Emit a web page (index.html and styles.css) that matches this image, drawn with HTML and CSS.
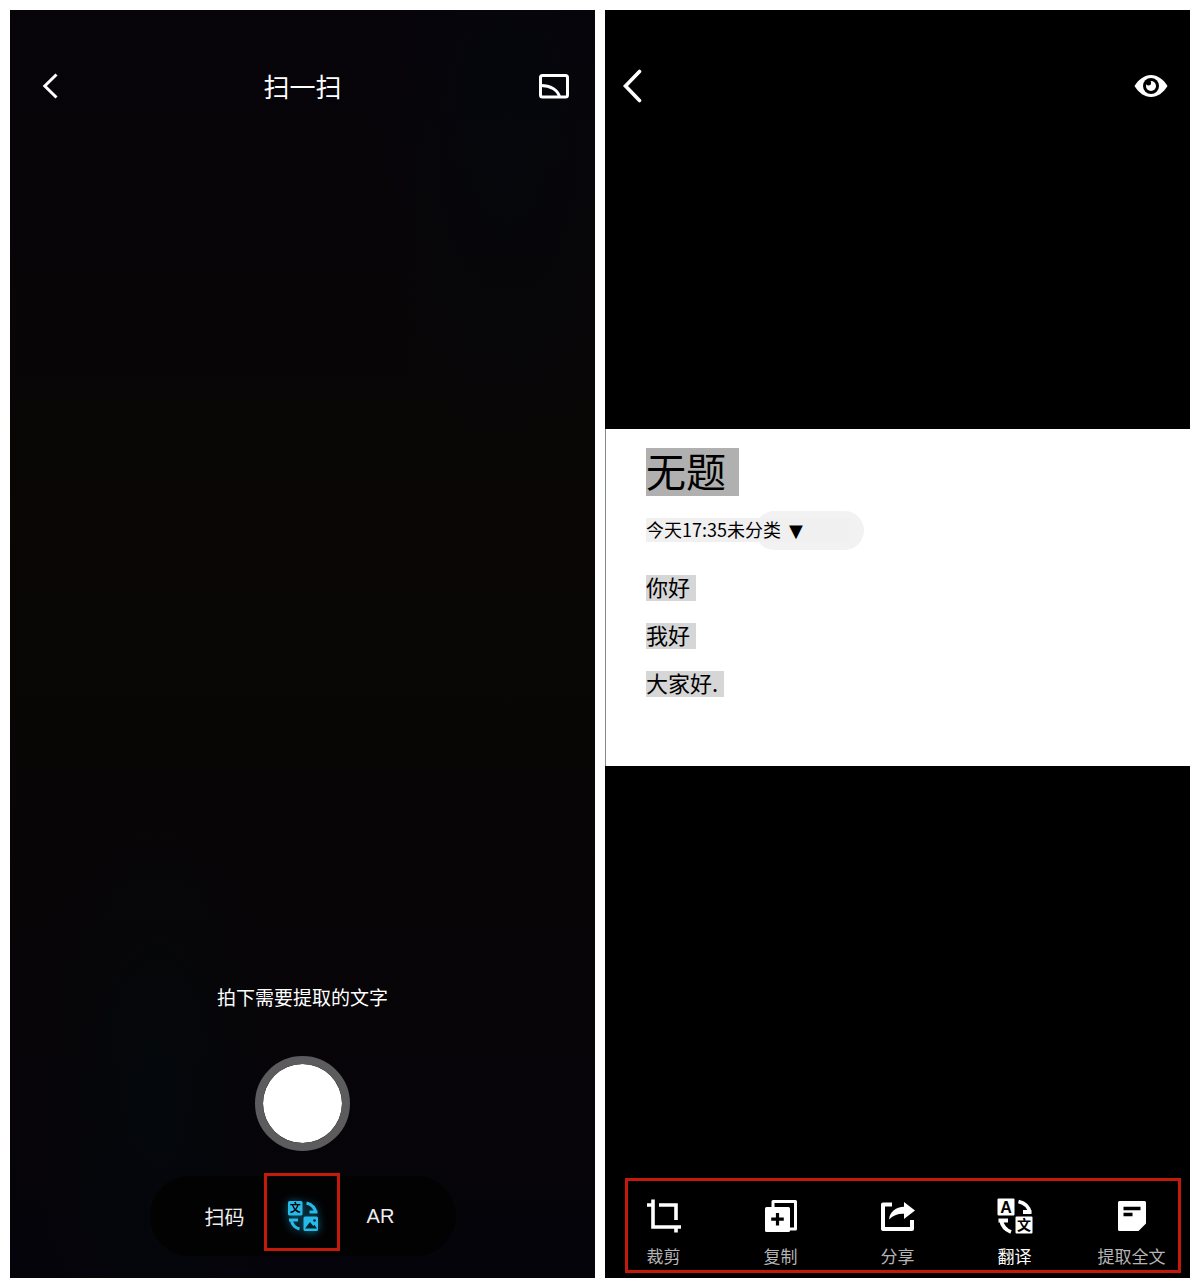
FILE: index.html
```html
<!DOCTYPE html>
<html lang="zh-CN">
<head>
  <meta charset="UTF-8">
  <meta name="viewport" content="width=device-width, initial-scale=1.0">
  <title>扫一扫</title>
  <link rel="stylesheet" href="styles.css">
</head>
<body>
  <main class="screens">
    <section class="screen camera">
      <header class="topbar">
        <button class="icon-button back" type="button" aria-label="返回">
          <svg width="16" height="26" viewBox="0 0 16 26" fill="none" stroke="currentColor" stroke-width="3">
            <path d="M14.5 1.5L2.8 13l11.7 11.5"/>
          </svg>
        </button>
        <h1 class="topbar-title">扫一扫</h1>
        <button class="icon-button album" type="button" aria-label="相册">
          <svg width="30" height="25" viewBox="0 0 30 25" fill="none" stroke="currentColor" stroke-width="3">
            <rect x="1.5" y="1.5" width="27" height="21.5" rx="2"/>
            <path d="M2 11.5C11 11.5 19 15.5 20.5 23"/>
          </svg>
        </button>
      </header>

      <div class="capture">
        <p class="hint">拍下需要提取的文字</p>
        <button class="shutter" type="button" aria-label="拍照"></button>
        <nav class="modes">
          <button class="mode" type="button">扫码</button>
          <button class="mode active" type="button" aria-label="文字识别">
            <svg class="mode-icon" width="30" height="30" viewBox="0 0 30 30">
              <rect width="14.5" height="14.5" rx="1.5"/>
              <rect x="15.5" y="15.5" width="14.5" height="14.5" rx="1.5"/>
              <text class="glyph" x="7.2" y="11.4" font-size="11">文</text>
              <path class="hole" d="M17 27.5l5-6.5 3.2 4 1.2-1.3 2.6 3.8z"/>
              <circle class="hole" cx="26.5" cy="19.5" r="1.3"/>
              <path class="arc" d="M18.5 2C24 3.500 27 6.500 28 12M21.500 11h8M11.500 28C6 26.500 4 23.500 3 18.500M1 19h9"/>
            </svg>
          </button>
          <button class="mode" type="button">AR</button>
        </nav>
      </div>
    </section>

    <section class="screen result">
      <header class="topbar">
        <button class="icon-button" type="button" aria-label="返回">
          <svg width="20" height="34" viewBox="0 0 20 34" fill="none" stroke="currentColor" stroke-width="3.6" stroke-linecap="round">
            <path d="M17.500 2.500L3.500 17l14 14.500"/>
          </svg>
        </button>
        <button class="icon-button preview" type="button" aria-label="查看原图">
          <svg width="34" height="22" viewBox="0 0 34 22">
            <path fill="currentColor" d="M.5 11C5 4 10.500 0 17 0s12 4 16.500 11C29 18 23.500 22 17 22S5 18 .5 11z"/>
            <circle cx="17" cy="11" r="8"/>
            <circle fill="currentColor" cx="17" cy="11" r="5"/>
            <circle cx="14.5" cy="7.8" r="2.6"/>
          </svg>
        </button>
      </header>

      <div class="viewer">
        <article class="photo">
          <h2 class="note-title"><mark>无题</mark></h2>
          <p class="note-meta"><span class="meta-text">今天17:35未分类 <span class="arrow">▼</span></span></p>
          <ul class="note-lines">
            <li><mark>你好</mark></li>
            <li><mark>我好</mark></li>
            <li><mark>大家好.</mark></li>
          </ul>
        </article>
      </div>

      <nav class="toolbar">
        <button class="tool" type="button">
          <span class="tool-icon">
            <svg width="34" height="34" viewBox="0 0 34 34" fill="none" stroke="currentColor" stroke-width="3.6">
              <path d="M6 .5V28h28M0 6h6M12 6h17v15M29 28v5.5"/>
            </svg>
          </span>
          裁剪
        </button>
        <button class="tool" type="button">
          <span class="tool-icon">
            <svg width="32" height="32" viewBox="0 0 32 32">
              <path d="M8 8V1.5h22.5V29H24" fill="none" stroke="currentColor" stroke-width="3" stroke-linejoin="round"/>
              <rect y="7" width="25" height="25" rx="1.5" fill="currentColor"/>
              <path d="M12.5 13v12.500M6.200 19.200h12.600" stroke="#000" stroke-width="3.200"/>
            </svg>
          </span>
          复制
        </button>
        <button class="tool" type="button">
          <span class="tool-icon">
            <svg width="34" height="34" viewBox="0 0 34 34">
              <path d="M11 5.500H2V30h29V21" fill="none" stroke="currentColor" stroke-width="4" stroke-linejoin="round"/>
              <path d="M23 3l11 8.500L23 20v-5.200C17 14.500 12 16.500 8 20.500 9 12.500 15 8 23 7.800z" fill="currentColor"/>
            </svg>
          </span>
          分享
        </button>
        <button class="tool selected" type="button">
          <span class="tool-icon">
            <svg width="36" height="36" viewBox="0 0 36 36" fill="currentColor">
              <rect x=".5" y=".5" width="17" height="17" rx="1"/>
              <rect x="18.5" y="18.5" width="17" height="17" rx="1"/>
              <text class="glyph latin" x="9" y="14.5" font-size="16" aria-hidden="true">A</text>
              <text class="glyph" x="27" y="32" font-size="14" aria-hidden="true">文</text>
              <path d="M21.500 3.500C28 5 32 8.500 33 15M26 14h8.500M14 34C7.500 31.500 5 28 4 22M1.500 22.500H11" fill="none" stroke="currentColor" stroke-width="3.800"/>
            </svg>
          </span>
          翻译
        </button>
        <button class="tool" type="button">
          <span class="tool-icon">
            <svg width="28" height="30" viewBox="0 0 28 30">
              <path d="M1.500 0h25A1.500 1.500 0 0 1 28 1.500V22.500L20.500 30h-19A1.500 1.500 0 0 1 0 28.500v-27A1.500 1.500 0 0 1 1.500 0z" fill="currentColor"/>
              <path d="M5.500 7.500h17M5.500 13.500h9" stroke="#000" stroke-width="3.500"/>
            </svg>
          </span>
          提取全文
        </button>
      </nav>
    </section>
  </main>
</body>
</html>
```
FILE: styles.css
```css
* {
  margin: 0;
  padding: 0;
  box-sizing: border-box;
}

body {
  font-family: 'Noto Sans CJK SC', 'Noto Sans', sans-serif;
  background: #fff;
  color: #fff;
}

button {
  font: inherit;
  color: inherit;
  background: none;
  border: none;
  cursor: pointer;
}

svg {
  display: block;
}

.screens {
  display: grid;
  grid-template-columns: 1fr 1fr;
  gap: 10px;
  min-height: 100vh;
  padding: 10px;
}

.screen {
  display: flex;
  flex-direction: column;
  padding-top: 46px;
}

.camera {
  background:
    radial-gradient(ellipse at 85% 10%, rgba(0, 10, 16, 0.4), transparent 20%),
    radial-gradient(ellipse at 25% 85%, rgba(0, 12, 16, 0.4), transparent 20%),
    linear-gradient(#07040a, #090605 40%, #080506 65%, #05040a);
}

.result {
  background: #000;
}

/* Top bar */
.topbar {
  display: grid;
  grid-template-columns: 1fr auto 1fr;
  align-items: center;
  height: 60px;
  padding: 0 26px;
}

.topbar-title {
  font-size: 26px;
  line-height: 32px;
  font-weight: 400;
}

.icon-button {
  justify-self: start;
}

.back {
  padding-left: 6px;
}

.album,
.preview {
  justify-self: end;
}

.result .topbar {
  grid-template-columns: 1fr 1fr;
  padding: 0 22px 0 17px;
}

/* Capture controls */
.capture {
  display: flex;
  flex-direction: column;
  align-items: center;
  margin-top: auto;
  padding-bottom: 22px;
}

.hint {
  font-size: 19px;
  line-height: 24px;
  margin-bottom: 47px;
}

.shutter {
  width: 95px;
  height: 95px;
  margin-bottom: 25px;
  background: #fff;
  background-clip: padding-box;
  border: 8px solid #5c5b5d;
  border-radius: 50%;
}

.modes {
  display: grid;
  grid-template-columns: repeat(3, 78px);
  height: 80px;
  padding: 0 36px;
  background: #020203;
  border-radius: 40px;
}

.mode {
  position: relative;
  display: flex;
  align-items: center;
  justify-content: center;
  font-family: 'Liberation Sans', 'Noto Sans CJK SC', sans-serif;
  font-size: 20px;
  color: #eee;
}

.mode.active::before {
  content: '';
  position: absolute;
  inset: -3px 2px 5px 0;
  border: 3px solid #c41a0c;
}

.mode-icon {
  fill: #27b9e8;
  overflow: visible;
  filter: drop-shadow(0 1px 4px rgba(20, 150, 190, 0.7));
}

.mode-icon .hole {
  fill: #03222c;
}

.mode-icon .arc {
  fill: none;
  stroke: #27b9e8;
  stroke-width: 3;
}

.glyph {
  font-weight: 700;
  text-anchor: middle;
  fill: #000;
}

.latin {
  font-family: 'Liberation Sans', sans-serif;
}

/* Recognised note */
.viewer {
  flex: 1;
  display: flex;
  flex-direction: column;
  justify-content: center;
  padding-bottom: 100px;
}

.photo {
  padding: 19px 40px 69px;
  background: #fff;
  border-left: 1px solid #888;
  color: #000;
}

mark {
  display: inline-block;
  color: inherit;
  background: #d6d6d6;
}

.note-title {
  display: flex;
  font-size: 40px;
  line-height: 44px;
  font-weight: 400;
  margin-bottom: 15px;
}

.note-title mark {
  padding: 0 13px 4px 0;
  background: #b0b0b0;
}

.note-meta {
  position: relative;
  display: flex;
  align-items: center;
  height: 39px;
  margin-bottom: 25px;
  font-size: 18px;
  line-height: 22px;
}

/* category pill lies behind the recognised text */
.note-meta::before {
  content: '';
  position: absolute;
  left: 109px;
  width: 109px;
  height: 39px;
  background: #f2f2f2;
  border-radius: 20px;
}

.meta-text {
  position: relative;
  width: 204px;
  background: #f0f0f0;
}

.arrow {
  font-family: 'DejaVu Sans', sans-serif;
  margin-left: 4px;
}

.note-lines {
  display: flex;
  flex-direction: column;
  gap: 22px;
  list-style: none;
  font-size: 22px;
  line-height: 22px;
}

.note-lines li {
  display: flex;
}

.note-lines mark {
  padding: 0 6px 4px 0;
}

/* Toolbar */
.toolbar {
  position: relative;
  display: grid;
  grid-template-columns: repeat(5, 1fr);
  padding: 20px 0 7px;
  margin-bottom: 5px;
}

.toolbar::before {
  content: '';
  position: absolute;
  inset: 0 9px 0 20px;
  border: 3px solid #c41a0c;
  pointer-events: none;
}

.tool {
  display: flex;
  flex-direction: column;
  align-items: center;
  gap: 12px;
  font-size: 17px;
  line-height: 20px;
  color: #b4b4b4;
}

.tool.selected {
  color: #fff;
}

.tool-icon {
  display: flex;
  align-items: center;
  justify-content: center;
  height: 36px;
  color: #fff;
}
```
